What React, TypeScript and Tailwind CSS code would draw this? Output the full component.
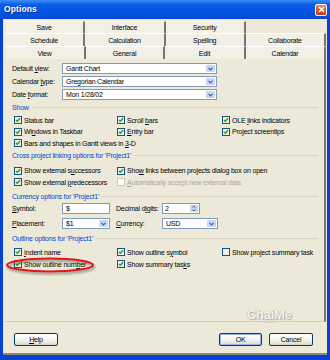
import { FC, ReactNode } from 'react'

// label with a mnemonic letter underlined
const Mn: FC<{ t: string; u?: number }> = ({ t, u }) => {
  if (u === undefined) return <>{t}</>
  return (
    <>
      {t.slice(0, u)}
      <u>{t[u]}</u>
      {t.slice(u + 1)}
    </>
  )
}

const Box: FC<{ checked?: boolean; disabled?: boolean }> = ({ checked = true, disabled = false }) => (
  <svg width="8" height="8" viewBox="0 0 8 8" className="shrink-0">
    <rect
      x="0.5"
      y="0.5"
      width="7"
      height="7"
      fill={disabled ? '#ffffff' : '#f1f0ea'}
      stroke={disabled ? '#cac8bb' : '#1c5180'}
    />
    {checked && <path d="M1.9 3.9 L3.3 5.3 L6.1 2.3" stroke="#21a121" strokeWidth="1.4" fill="none" />}
  </svg>
)

const Check: FC<{ t: string; u?: number; checked?: boolean; disabled?: boolean }> = ({
  t,
  u,
  checked = true,
  disabled = false
}) => (
  <div className={`flex items-center gap-[2px] h-[11.5px] whitespace-nowrap ${disabled ? 'text-[#aca899]' : ''}`}>
    <Box checked={checked && !disabled} disabled={disabled} />
    <span>
      <Mn t={t} u={u} />
    </span>
  </div>
)

const Chevron = () => (
  <svg width="5" height="4" viewBox="0 0 5 4">
    <path d="M0.5 0.8 L2.5 2.8 L4.5 0.8" stroke="#4d6185" strokeWidth="1.2" fill="none" />
  </svg>
)

const Combo: FC<{ value: string; w: string }> = ({ value, w }) => (
  <div className={`flex h-[11px] border border-[#7f9db9] bg-white ${w}`}>
    <span className="flex-1 flex items-center pl-[3px]">{value}</span>
    <span className="w-[9px] m-px flex items-center justify-center rounded-[1px] bg-[#c6d5fb]">
      <Chevron />
    </span>
  </div>
)

const Group: FC<{ title: string; className?: string }> = ({ title, className }) => (
  <div className={`flex items-center h-[10px] pl-[7px] pr-[6px] ${className ?? ''}`}>
    <span className="text-[#0046d5] whitespace-nowrap">{title}</span>
    <div className="flex-1 ml-[3px] h-px bg-[#d5d2c2]" />
  </div>
)

const Tab: FC<{ children?: ReactNode; empty?: boolean }> = ({ children, empty }) =>
  empty ? (
    <div />
  ) : (
    <div className="flex items-center justify-center border-t border-t-white border-r-2 border-r-[#77756c] bg-[#f2f0e6]">
      {children}
    </div>
  )

function cx(...a: string[]) {
  return a.filter(Boolean).join(' ')
}

const XpButton: FC<{ children: ReactNode; primary?: boolean; w: string }> = ({ children, primary, w }) => (
  <div
    className={cx(
      'h-[13px] flex items-center justify-center rounded-[2px] border border-[#003c74] bg-[linear-gradient(#ffffff,#f3f2ec_60%,#d9d7cc)]',
      primary ? 'shadow-[inset_0_0_0_1px_#98b4e6]' : '',
      w
    )}
  >
    {children}
  </div>
)

export default function App() {
  return (
    <div className="w-[330px] h-[360px] flex flex-col bg-[#0842d4] font-['Liberation_Sans',Arial,sans-serif] text-[7px] tracking-[-0.2px] leading-none text-black">
      {/* title bar */}
      <div className="h-[19px] flex items-center justify-between pl-[4px] pr-[3px] bg-[linear-gradient(#3d8ef7,#0a5be8_25%,#0055e3_70%,#0747cf)]">
        <span className="text-white font-bold text-[8.5px] tracking-[0.1px] [text-shadow:1px_1px_0_#0a2a8a]">Options</span>
        <div className="w-[12px] h-[12px] rounded-[2px] border border-white bg-[linear-gradient(#ec8a6c,#d8502a_60%,#c23a17)] flex items-center justify-center">
          <svg width="7" height="7" viewBox="0 0 7 7">
            <path d="M1 1 L6 6 M6 1 L1 6" stroke="white" strokeWidth="1.6" />
          </svg>
        </div>
      </div>

      {/* body */}
      <div className="flex-1 mx-[3px] flex flex-col bg-[#ece9d8] border-b-2 border-b-[#8a877a]">
        <div className="pt-[2px] pl-[2px] pr-[1px]">
          <div className="grid grid-cols-4 h-[12px]">
            <Tab>Save</Tab>
            <Tab>Interface</Tab>
            <Tab>Security</Tab>
            <Tab empty />
          </div>
          <div className="grid grid-cols-4 h-[13px]">
            <Tab>Schedule</Tab>
            <Tab>Calculation</Tab>
            <Tab>Spelling</Tab>
            <Tab>Collaborate</Tab>
          </div>
          <div className="grid grid-cols-[81px_79px_81px_1fr] h-[13px]">
            <Tab>View</Tab>
            <Tab>General</Tab>
            <Tab>Edit</Tab>
            <Tab>Calendar</Tab>
          </div>

          {/* tab page */}
          <div className="relative h-[263px] border-r-2 border-r-[#77756c] border-b border-b-[#cfccbd] flex flex-col">
            <div className="mt-[4px] flex flex-col gap-[2px] pl-[7px]">
              <div className="flex items-center">
                <span className="w-[50px]">
                  <Mn t="Default view:" u={8} />
                </span>
                <Combo value="Gantt Chart" w="w-[155px]" />
              </div>
              <div className="flex items-center">
                <span className="w-[50px]">
                  <Mn t="Calendar type:" u={9} />
                </span>
                <Combo value="Gregorian Calendar" w="w-[155px]" />
              </div>
              <div className="flex items-center">
                <span className="w-[50px]">
                  <Mn t="Date format:" u={5} />
                </span>
                <Combo value="Mon 1/28/02" w="w-[155px]" />
              </div>
            </div>

            <Group title="Show" className="mt-[2px]" />
            <div className="mt-[2.5px] pl-[9px] grid grid-cols-[103px_105px_1fr]">
              <Check t="Status bar" />
              <Check t="Scroll bars" u={7} />
              <Check t="OLE links indicators" u={4} />
              <Check t="Windows in Taskbar" u={2} />
              <Check t="Entry bar" u={0} />
              <Check t="Project screentips" />
              <div className="col-span-3">
                <Check t="Bars and shapes in Gantt views in 3-D" u={34} />
              </div>
            </div>

            <Group title="Cross project linking options for 'Project1'" className="mt-[1px]" />
            <div className="mt-[5px] pl-[9px] grid grid-cols-[103px_1fr]">
              <Check t="Show external successors" u={15} />
              <Check t="Show links between projects dialog box on open" u={3} />
              <Check t="Show external predecessors" u={14} />
              <Check t="Automatically accept new external data" u={0} disabled />
            </div>

            <Group title="Currency options for 'Project1'" className="mt-[3px]" />
            <div className="mt-[2px] pl-[7px] grid grid-cols-[50px_54px_46px_1fr] gap-y-[4px] items-center">
              <span>
                <Mn t="Symbol:" u={0} />
              </span>
              <div className="w-[48px] h-[11px] border border-[#7f9db9] bg-white flex items-center pl-[3px]">$</div>
              <span>
                <Mn t="Decimal digits:" u={9} />
              </span>
              <div className="w-[38px] h-[11px] border border-[#7f9db9] bg-white flex">
                <span className="flex-1 flex items-center pl-[2px]">2</span>
                <span className="w-[8px] m-px flex flex-col items-center justify-center gap-[1px] bg-[#c6d5fb]">
                  <svg width="4" height="3" viewBox="0 0 4 3">
                    <path d="M0.5 2.5 L2 1 L3.5 2.5" stroke="#4d6185" strokeWidth="1" fill="none" />
                  </svg>
                  <svg width="4" height="3" viewBox="0 0 4 3">
                    <path d="M0.5 0.5 L2 2 L3.5 0.5" stroke="#4d6185" strokeWidth="1" fill="none" />
                  </svg>
                </span>
              </div>
              <span>
                <Mn t="Placement:" u={0} />
              </span>
              <Combo value="$1" w="w-[48px]" />
              <span>
                <Mn t="Currency:" u={0} />
              </span>
              <Combo value="USD" w="w-[56px]" />
            </div>

            <Group title="Outline options for 'Project1'" className="mt-[4px]" />
            <div className="mt-[3.5px] pl-[9px] grid grid-cols-[103px_105px_1fr] gap-y-[0.5px]">
              <Check t="Indent name" u={0} />
              <Check t="Show outline symbol" u={14} />
              <Check t="Show project summary task" u={8} checked={false} />
              <Check t="Show outline number" u={16} />
              <Check t="Show summary tasks" u={16} />
            </div>

            {/* red annotation ellipse */}
            <svg
              width="92"
              height="20"
              viewBox="0 0 92 20"
              className="absolute left-0 top-[197px] drop-shadow-[1px_2px_1px_rgba(60,60,50,0.55)]"
            >
              <ellipse cx="45" cy="9" rx="43" ry="6.5" fill="none" stroke="#e3141c" strokeWidth="2" />
            </svg>

            {/* watermark */}
            <div className="absolute left-[242px] top-[249px] flex flex-col items-center">
              <span className="text-[13px] font-bold text-[#f4f4f0] tracking-[-0.3px] [text-shadow:0_0_1px_#9a998f,1px_1px_1px_#b3b1a5]">
                ChaiMe
              </span>
              <span className="text-[2px] text-[#c8c6bb]">www.chaime.com</span>
            </div>
          </div>
        </div>

        {/* buttons */}
        <div className="mt-[11px] flex items-center pl-[11px] pr-[14px]">
          <XpButton w="w-[44px]">
            <Mn t="Help" u={0} />
          </XpButton>
          <div className="flex-1" />
          <XpButton primary w="w-[43px]">
            OK
          </XpButton>
          <div className="w-[7px]" />
          <XpButton w="w-[44px]">Cancel</XpButton>
        </div>
      </div>
      <div className="h-[5px]" />
    </div>
  )
}
